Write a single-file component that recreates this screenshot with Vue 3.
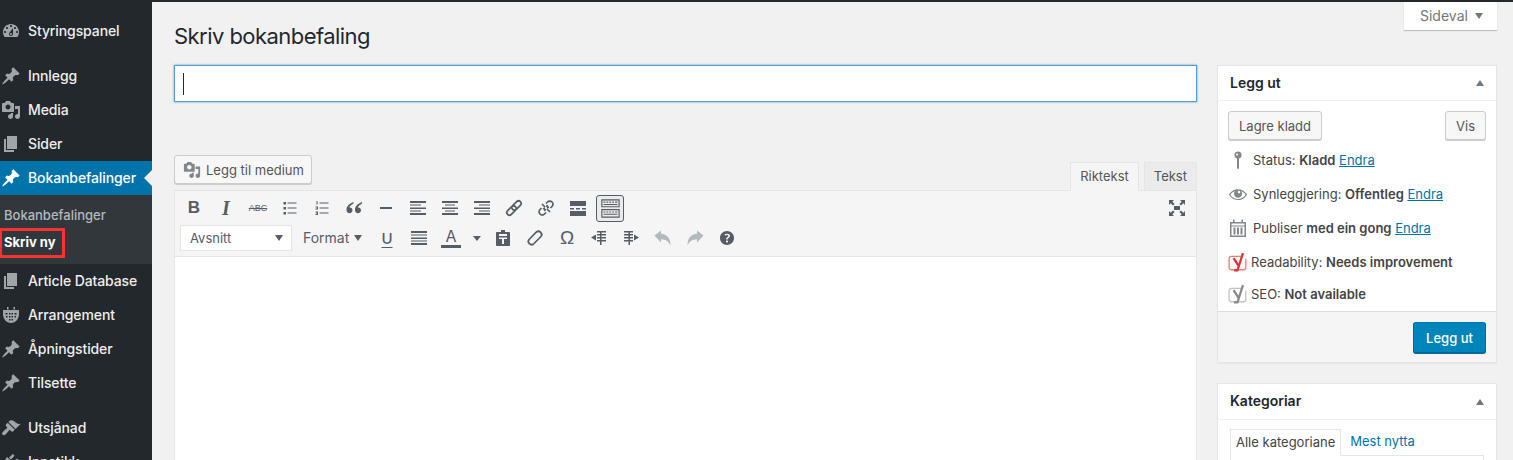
<template>
  <div class="admin">
    <aside class="menu">
      <template v-for="item in menuItems" :key="item.label">
        <div class="menu-item" :class="{ active: item.active, gap: item.gap }">
          <svg class="menu-icon" viewBox="0 0 20 20"><path :d="icons[item.icon]" /></svg>
          <span>{{ item.label }}</span>
          <i v-if="item.active" class="arrow"></i>
        </div>
        <div v-if="item.active" class="submenu">
          <div class="sub-head">Bokanbefalinger</div>
          <div class="sub-new"><span>Skriv ny</span></div>
        </div>
      </template>
    </aside>

    <main class="page">
      <header class="page-head">
        <h1>Skriv bokanbefaling</h1>
        <div class="screen-tab"><span>Sideval</span> <i class="caret"></i></div>
      </header>

      <div class="columns">
        <section class="content">
          <div class="title-input"><i class="cursor"></i></div>

          <div class="editor-top">
            <button class="btn media-btn">
              <svg viewBox="0 0 20 20"><path :d="icons.media" /></svg>
              Legg til medium
            </button>
            <div class="tabs">
              <div class="tab on">Riktekst</div>
              <div class="tab">Tekst</div>
            </div>
          </div>

          <div class="editor">
            <div class="toolbar">
              <div class="tool-row">
                <div
                  v-for="t in rowOne"
                  :key="t.id"
                  class="tool"
                  :class="[t.cls, { pressed: t.pressed }]"
                >
                  <span v-if="t.text">{{ t.text }}</span>
                  <svg v-else viewBox="0 0 20 20"><path :d="t.d" :class="{ line: t.line }" /></svg>
                </div>
                <div class="tool full">
                  <svg viewBox="0 0 20 20"><path :d="icons.fullscreen" /></svg>
                </div>
              </div>
              <div class="tool-row">
                <div class="select">Avsnitt <i class="caret"></i></div>
                <div class="format"><span>Format</span> <i class="caret"></i></div>
                <template v-for="t in rowTwo" :key="t.id">
                  <div class="tool" :class="[t.cls, { off: t.off }]">
                    <span v-if="t.text">{{ t.text }}</span>
                    <svg v-else viewBox="0 0 20 20"><path :d="t.d" :class="{ line: t.line }" /></svg>
                  </div>
                </template>
              </div>
            </div>
            <div class="editor-body"></div>
          </div>
        </section>

        <aside class="side">
          <div class="box">
            <div class="box-head"><span>Legg ut</span> <i class="caret up"></i></div>
            <div class="publish-actions">
              <button class="btn">Lagre kladd</button>
              <button class="btn">Vis</button>
            </div>
            <div class="meta">
              <div v-for="m in metaRows" :key="m.label" class="meta-row">
                <svg class="meta-icon" viewBox="0 0 20 20"><path :d="icons[m.icon]" /></svg>
                <span>{{ m.label }} <b>{{ m.value }}</b> <a href="#">Endra</a></span>
              </div>
              <div class="seo">
                <div v-for="s in seoRows" :key="s.label" class="seo-row" :class="s.cls">
                  <svg class="yoast" viewBox="0 0 18 18">
                    <path d="M16 6v8a2 2 0 0 1-2 2H3a2 2 0 0 1-2-2V6a2 2 0 0 1 2-2h9" class="y-box" />
                    <path d="M5 5.500 9.500 12.500M13.500 1 8.500 16.500H5.500" class="y-mark" />
                  </svg>
                  <span>{{ s.label }} <b>{{ s.value }}</b></span>
                </div>
              </div>
            </div>
            <div class="publish-foot">
              <button class="btn primary">Legg ut</button>
            </div>
          </div>

          <div class="box">
            <div class="box-head tall"><span>Kategoriar</span> <i class="caret up"></i></div>
            <div class="cat-body">
              <div class="cat-tabs">
                <div class="cat-tab on">Alle kategoriane</div>
                <a href="#" class="cat-tab">Mest nytta</a>
              </div>
              <div class="cat-list"></div>
            </div>
          </div>
        </aside>
      </div>
    </main>
  </div>
</template>

<script setup>
const icons = {
  dashboard: 'M3.76 16h12.48c1.1-1.37 1.76-3.11 1.76-5 0-4.42-3.58-8-8-8s-8 3.58-8 8c0 1.89.66 3.63 1.76 5zM10 4c.55 0 1 .45 1 1s-.45 1-1 1-1-.45-1-1 .45-1 1-1zM6 6c.55 0 1 .45 1 1s-.45 1-1 1-1-.45-1-1 .45-1 1-1zm8 0c.55 0 1 .45 1 1s-.45 1-1 1-1-.45-1-1 .45-1 1-1zm-5.37 5.55L12 7v6c0 1.1-.9 2-2 2s-2-.9-2-2c0-.57.24-1.08.63-1.45zM4 10c.55 0 1 .45 1 1s-.45 1-1 1-1-.45-1-1 .45-1 1-1zm12 0c.55 0 1 .45 1 1s-.45 1-1 1-1-.45-1-1 .45-1 1-1zm-5 3c0-.55-.45-1-1-1s-1 .45-1 1 .45 1 1 1 1-.45 1-1z',
  pin: 'M10.44 3.02l1.82-1.82 6.36 6.35-1.83 1.82c-1.05-.68-2.48-.57-3.41.36l-.75.75c-.92.93-1.04 2.35-.35 3.41l-1.83 1.82-2.41-2.41-2.8 2.79c-.42.42-3.38 2.71-3.8 2.29s1.86-3.39 2.28-3.81l2.79-2.79L4.1 9.36l1.83-1.82c1.05.69 2.48.57 3.4-.36l.75-.75c.93-.92 1.05-2.35.36-3.41z',
  media: 'M13 11V4c0-.55-.45-1-1-1h-1.67L9 1H5L3.67 3H2c-.55 0-1 .45-1 1v7c0 .55.45 1 1 1h10c.55 0 1-.45 1-1zM7 4.5c1.38 0 2.5 1.12 2.5 2.5S8.38 9.5 7 9.5 4.5 8.38 4.5 7 5.62 4.5 7 4.5zM14 6h5v10.5c0 1.38-1.12 2.5-2.5 2.5S14 17.88 14 16.5s1.12-2.5 2.5-2.5c.17 0 .34.02.5.05V9h-3V6zm-4 8.05V13h2v3.5c0 1.38-1.12 2.5-2.5 2.5S7 17.88 7 16.5 8.12 14 9.5 14c.17 0 .34.02.5.05z',
  page: 'M6 15V2h10v13H6zm-1 1h8v2H3V5h2v11z',
  events: 'M6 2h1.5v2.5H6zM12.5 2H14v2.5h-1.5zM2 5h16v4c0 5-3.5 9-8 9s-8-4-8-9zM4.5 8v1.5H6.5V8zM8 8v1.5h1.5V8zM10.5 8v1.5H12V8zM13.5 8v1.5h2V8zM5 11v1.5h1.5V11zM8 11v1.5h1.5V11zM10.5 11v1.5H12V11zM13.5 11v1.5H15V11zM8 14v1.5h1.5V14zM10.5 14v1.5H12V14z',
  brush: 'M14.48 11.06L7.41 3.99l1.5-1.5c.5-.56 2.3-.47 3.51.32 1.21.8 1.43 1.28 2.91 2.1 1.18.64 2.45 1.26 4.45.85zm-.71.71L6.7 4.7 4.93 6.47c-.39.39-.39 1.02 0 1.41l1.06 1.06c.39.39.39 1.03 0 1.42-.6.6-1.43 1.11-2.21 1.69-.35.26-.7.53-1.01.84-1.34 1.35-2.5 2.39-1.08 3.81 1.41 1.41 2.45.26 3.8-1.08.3-.3.58-.65.84-1 .57-.78 1.08-1.61 1.69-2.21.39-.39 1.02-.39 1.41 0l1.06 1.06c.39.39 1.02.39 1.41 0z',
  plugin: 'M13.11 4.36L9.87 7.6 8 5.73l3.24-3.24c.35-.34 1.05-.2 1.56.32.52.51.66 1.21.31 1.55zm-8 1.77l.91-1.12 9.01 9.01-1.19.84c-.71.71-2.63 1.16-3.82 1.16H6.14L4.9 17.26c-.59.59-1.54.59-2.12 0-.59-.58-.59-1.53 0-2.12l1.24-1.24v-3.88c0-1.13.4-3.19 1.09-3.89zm7.26 3.97l3.24-3.24c.34-.35 1.04-.21 1.55.31.52.51.66 1.21.31 1.55l-3.24 3.25z',
  location: 'M10 1.5a3.6 3.6 0 0 1 1 7.05V18l-1 1.5L9 18V8.55A3.6 3.6 0 0 1 10 1.5zM9 3.5a1 1 0 1 0 0 2 1 1 0 0 0 0-2z',
  eye: 'M18.3 9.5C15 4.9 8.5 3.8 3.9 7.2c-1.2.9-2.2 2.1-3 3.4.2.4.5.8.8 1.2 3.3 4.6 9.6 5.6 14.2 2.4.9-.7 1.8-1.5 2.5-2.4.3-.4.5-.8.8-1.2-.2-.4-.5-.8-.9-1.1zm-8.2-2.3c.5-.5 1.3-.5 1.8 0s.5 1.3 0 1.8-1.3.5-1.8 0-.5-1.3 0-1.8zm-.1 7.7c-3.1 0-6-1.6-7.7-4.2C3.5 9 5.1 7.8 7 7c-.7.8-1 1.7-1 2.7 0 2.2 1.7 4.1 4 4.1 2.2 0 4.1-1.7 4.1-4 0-1-.4-2-1.1-2.7 1.9.8 3.5 2 4.7 3.7-1.7 2.6-4.6 4.2-7.7 4.2z',
  calendar: 'M5 1.5h1.5V4H13.5V1.5H15V4h3v15H2V4h3zM3.5 5.5v2h13v-2zM3.5 8.5V17.5h13V8.5zM5.5 9.5h2v7h-2zM9 9.5h2v7H9zM12.5 9.5h2v7h-2z',
  fullscreen: 'M2 2h5L5.3 3.7 7.6 6 6 7.6 3.7 5.3 2 7zM18 2v5l-1.7-1.7L14 7.6 12.4 6l2.3-2.3L13 2zM2 18v-5l1.7 1.7L6 12.4 7.6 14l-2.3 2.3L7 18zM18 18h-5l1.7-1.7-2.3-2.3 1.6-1.6 2.3 2.3L18 13zM7 8h6v4H7z'
}

const menuItems = [
  { label: 'Styringspanel', icon: 'dashboard' },
  { label: 'Innlegg', icon: 'pin', gap: true },
  { label: 'Media', icon: 'media' },
  { label: 'Sider', icon: 'page' },
  { label: 'Bokanbefalinger', icon: 'pin', active: true },
  { label: 'Article Database', icon: 'page' },
  { label: 'Arrangement', icon: 'events' },
  { label: 'Åpningstider', icon: 'pin' },
  { label: 'Tilsette', icon: 'pin' },
  { label: 'Utsjånad', icon: 'brush', gap: true },
  { label: 'Innstikk', icon: 'plugin' }
]

const linkPath = 'M7.34 16.34L11.34 12.34A2.6 2.6 0 0 0 7.66 8.66L3.66 12.66A2.6 2.6 0 0 0 7.34 16.34zM12.34 11.34L16.34 7.34A2.6 2.6 0 0 0 12.66 3.66L8.66 7.66A2.6 2.6 0 0 0 12.34 11.34z'

const rowOne = [
  { id: 'bold', text: 'B', cls: 'bold' },
  { id: 'italic', text: 'I', cls: 'italic' },
  { id: 'strike', text: 'ABC', cls: 'strike' },
  { id: 'ul', d: 'M3.5 4h2.500v2.500h-2.500zM3.5 9h2.500v2.500h-2.500zM3.5 14h2.500v2.500h-2.500zM7.5 4.500h9v1h-9zM7.500 9.500h9v1h-9zM7.500 14.500h9v1h-9z' },
  { id: 'ol', d: 'M4.500 3h1v3.500h-1zM3.500 8.500h2.500v3h-2.500v-1h1.500v-1h-1.500zM3.500 13.500h2.500v3.500h-2.500v-1h1.500v-.5h-1v-.7h1v-.3h-1.500zM7.500 4.500h9v1h-9zM7.500 9.500h9v1h-9zM7.500 14.500h9v1h-9z' },
  { id: 'quote', d: 'M9.500 4C5 5.600 2.500 8.500 2.500 11.800c0 2 1.200 3.400 3 3.400 1.700 0 3-1.300 3-2.900 0-1.600-1.100-2.800-2.600-2.800-.2 0-.4 0-.6.100.4-1.400 2-3 4.300-4.100zM18 4c-4.500 1.600-7 4.500-7 7.800 0 2 1.200 3.400 3 3.400 1.700 0 3-1.300 3-2.900 0-1.600-1.100-2.800-2.600-2.800-.2 0-.4 0-.6.100.4-1.400 2-3 4.300-4.100z' },
  { id: 'hr', d: 'M4 9h12v2H4z' },
  { id: 'left', d: 'M2 3h16v2H2zM2 6.500h11v1H2zM2 9.500h16v1.500H2zM2 12.500h11v1H2zM2 15h16v2H2z' },
  { id: 'center', d: 'M2 3h16v2H2zM5 6.500h10v1H5zM2 9.500h16v1.500H2zM5 12.500h10v1H5zM2 15h16v2H2z' },
  { id: 'right', d: 'M2 3h16v2H2zM7 6.500h11v1H7zM2 9.500h16v1.500H2zM7 12.500h11v1H7zM2 15h16v2H2z' },
  { id: 'link', d: linkPath, line: true },
  { id: 'unlink', d: 'M10 5.500L11.500 4A3 3 0 0 1 16 8.500L14.500 10M10 14.500L8.500 16A3 3 0 0 1 4 11.500L5.500 10M6 6l3 3M14 14l-3-3M11.500 7l-1 2M8.500 13l1-2M7 11l2-1M13 9l-2 1', line: true },
  { id: 'more', d: 'M2 3h16v5H2zM2 10h4v1.500H2zM8 10h4v1.500H8zM14 10h4v1.500h-4zM2 13h16v5H2z' },
  { id: 'kbd', pressed: true, d: 'M2 2h16v7H2zM3 3v5h14V3zM4 4h1.500v1H4zM6.500 4h1.500v1H6.500zM9 4h1.500v1H9zM11.500 4h1.500v1h-1.500zM14 4h2v1h-2zM4 6h12v1H4zM2 10.500h16v7.500H2zM3 11.500v5.500h14v-5.500zM4 12.500h1.500v1H4zM6.500 12.500h1.500v1H6.500zM9 12.500h1.500v1H9zM11.500 12.500h1.500v1h-1.500zM14 12.500h2v1h-2zM4 14.500h12v1H4z' }
]

const rowTwo = [
  { id: 'underline', text: 'U', cls: 'under' },
  { id: 'justify', d: 'M2 3h16v2H2zM2 6.500h16v1H2zM2 9.500h16v1.500H2zM2 12.500h16v1H2zM2 15h16v2H2z' },
  { id: 'color', text: 'A', cls: 'color' },
  { id: 'colordrop', cls: 'drop', d: 'M6 8h8l-4 5z' },
  { id: 'paste', d: 'M8 2h4v2h4c.6 0 1 .4 1 1v12c0 .6-.4 1-1 1H4c-.6 0-1-.4-1-1V5c0-.6.4-1 1-1h4zM6 6v2h8V6zM6 9.500v1.500h3v5h2v-5h3V9.500z' },
  { id: 'eraser', line: true, d: 'M8.760 15.760L15.760 8.760A3.200 3.200 0 0 0 11.240 4.240L4.240 11.240A3.200 3.200 0 0 0 8.760 15.760z' },
  { id: 'omega', text: 'Ω', cls: 'omega' },
  { id: 'outdent', d: 'M8 3h9v1.500H8zM8 6h9v1.500H8zM8 9h9v1.500H8zM8 12h9v1.500H8zM11 3h1.500v14H11zM7 6.500v6l-5-3z' },
  { id: 'indent', d: 'M3 3h9v1.500H3zM3 6h9v1.500H3zM3 9h9v1.500H3zM3 12h9v1.500H3zM7.500 3H9v14H7.500zM13 6.500v6l5-3z' },
  { id: 'undo', off: true, d: 'M1.500 7.500L8 2.500v3.300c6 .5 9.500 4 9.500 11.700-2-4.200-4.500-6-9.500-6.200v3.200z' },
  { id: 'redo', off: true, d: 'M18.500 7.500L12 2.500v3.300c-6 .5-9.500 4-9.500 11.700 2-4.200 4.500-6 9.500-6.200v3.200z' },
  { id: 'help', d: 'M17 10c0-3.870-3.140-7-7-7-3.870 0-7 3.130-7 7s3.130 7 7 7c3.860 0 7-3.130 7-7zm-6.300 1.480H9.140v-.43c0-.38.08-.7.24-.98s.46-.57.88-.89c.41-.29.68-.53.81-.71.14-.18.2-.39.2-.62 0-.25-.09-.44-.28-.58-.19-.13-.45-.19-.79-.19-.58 0-1.250.19-2 .57l-.64-1.280c.87-.49 1.800-.74 2.770-.74.81 0 1.450.2 1.920.58.48.39.71.91.71 1.550 0 .43-.09.8-.29 1.110-.19.32-.57.67-1.110 1.060-.38.28-.61.49-.71.63-.1.15-.15.34-.15.57v.35zm-1.470 2.740c-.18-.17-.27-.42-.27-.73 0-.33.08-.58.26-.75s.43-.25.77-.25c.32 0 .57.09.75.26s.27.42.27.74c0 .3-.09.55-.27.72-.18.18-.43.27-.75.27-.33 0-.58-.09-.76-.26z' }
]

const metaRows = [
  { label: 'Status:', value: 'Kladd', icon: 'location' },
  { label: 'Synleggjering:', value: 'Offentleg', icon: 'eye' },
  { label: 'Publiser', value: 'med ein gong', icon: 'calendar' }
]

const seoRows = [
  { label: 'Readability:', value: 'Needs improvement', cls: 'bad' },
  { label: 'SEO:', value: 'Not available', cls: 'none' }
]
</script>

<style>
html, body {
  margin: 0;
  background: #f1f1f1;
  overflow: hidden;
}
</style>

<style scoped>
.admin {
  display: flex;
  width: 1513px;
  height: 460px;
  overflow: hidden;
  border-top: 2px solid #23282d;
  box-sizing: border-box;
  font-family: Inter, Roboto, "Liberation Sans", sans-serif;
  font-size: 13px;
  color: #444;
  background: #f1f1f1;
}

/* left menu */
.menu {
  width: 152px;
  flex: none;
  background: #23282d;
  padding-top: 12px;
  height: 500px;
}
.menu-item {
  position: relative;
  display: flex;
  align-items: center;
  height: 34px;
  color: #eee;
  font-size: 14px;
  font-weight: 500;
  letter-spacing: -0.1px;
}
.menu-item span { margin-bottom: 2px; }
.menu-item.gap { margin-top: 11px; }
.menu-item.active {
  background: #0073aa;
  color: #fff;
}
.menu-icon {
  width: 20px;
  height: 20px;
  margin: 0 7px 0 1px;
  fill: #a0a5aa;
  flex: none;
}
.active .menu-icon { fill: #fff; }
.arrow {
  position: absolute;
  right: 0;
  top: 9px;
  border: 8px solid transparent;
  border-right-color: #f1f1f1;
  border-left-width: 0;
}
.submenu {
  background: #32373c;
  height: 69px;
  padding-top: 11px;
  box-sizing: border-box;
}
.sub-head {
  padding-left: 4px;
  height: 18px;
  line-height: 18px;
  font-size: 13px;
  font-weight: 500;
  color: #b4b9be;
}
.sub-new {
  margin-top: 4px;
  width: 65px;
  height: 30px;
  box-sizing: border-box;
  border: 3px solid #f8322f;
  border-left-width: 2px;
  line-height: 22px;
  padding-left: 2px;
  color: #fff;
  font-size: 13px;
  font-weight: 700;
}

/* main */
.page {
  flex: 1;
  min-width: 0;
  padding: 0 16px 0 22px;
}
.page-head {
  display: flex;
  height: 63px;
  align-items: flex-start;
  justify-content: space-between;
}
h1 {
  margin: 20px 0 0;
  font-size: 22px;
  line-height: 28px;
  font-weight: 400;
  letter-spacing: -0.55px;
  color: #23282d;
}
.screen-tab {
  width: 93px;
  height: 28px;
  box-sizing: border-box;
  padding-left: 16px;
  background: #fff;
  box-shadow: 0 1px 1px rgba(0, 0, 0, 0.2);
  color: #72777c;
  font-size: 14px;
  display: flex;
  align-items: center;
  gap: 7px;
}
.screen-tab span { margin-bottom: 2px; }
.caret {
  display: inline-block;
  border: 4px solid transparent;
  border-top: 6px solid #72777c;
  border-bottom-width: 0;
}
.caret.up {
  border-top-width: 0;
  border-bottom: 6px solid #72777c;
}

.columns {
  display: flex;
  gap: 20px;
}
.content {
  flex: 1;
  min-width: 0;
}
.title-input {
  height: 37px;
  box-sizing: border-box;
  background: #fff;
  border: 1px solid #5b9dd9;
  box-shadow: 0 0 2px rgba(30, 140, 190, 0.8);
  padding: 7px 8px;
}
.cursor {
  display: block;
  width: 1px;
  height: 22px;
  background: #23282d;
}
.editor-top {
  display: flex;
  justify-content: space-between;
  align-items: flex-end;
  margin-top: 53px;
  height: 35px;
}
.btn {
  height: 29px;
  padding: 0 10px;
  border: 1px solid #ccc;
  border-radius: 3px;
  background: #f7f7f7;
  box-shadow: 0 1px 0 #ccc;
  color: #555;
  font: inherit;
  font-size: 13px;
  white-space: nowrap;
}
.media-btn {
  display: flex;
  align-items: center;
  gap: 5px;
  margin-bottom: 6px;
  padding: 0 8px;
  width: 138px;
}
.media-btn svg {
  width: 18px;
  height: 18px;
  flex: none;
  fill: #82878c;
}
.tabs {
  display: flex;
  gap: 5px;
  position: relative;
  top: 1px;
}
.tab {
  height: 29px;
  line-height: 26px;
  box-sizing: border-box;
  padding: 0 9px;
  font-size: 13px;
  color: #555;
  background: #ebebeb;
  border: 1px solid #e5e5e5;
}
.tab.on {
  background: #f5f5f5;
  border-bottom-color: #f5f5f5;
}
.editor {
  border: 1px solid #e5e5e5;
  height: 300px;
  background: #fff;
}
.toolbar {
  height: 66px;
  box-sizing: border-box;
  padding: 2px 3px 0;
  background: #f5f5f5;
  border-bottom: 1px solid #e5e5e5;
}
.tool-row {
  display: flex;
  height: 30px;
  align-items: center;
}
.tool {
  width: 32px;
  height: 28px;
  display: flex;
  align-items: center;
  justify-content: center;
  box-sizing: border-box;
  color: #555d66;
  flex: none;
}
.tool svg {
  width: 20px;
  height: 20px;
  fill: #555d66;
}
.tool .line {
  fill: none;
  stroke: #555d66;
  stroke-width: 1.7;
}
.tool.off svg { fill: #b4b9be; }
.tool.pressed {
  width: 28px;
  margin-left: 2px;
  height: 27px;
  border: 1px solid #555d66;
  border-radius: 3px;
  background: #ebebeb;
}
.tool.pressed svg {
  width: 23px;
  height: 23px;
  flex: none;
}
.tool.full {
  margin-left: auto;
}
.bold span {
  font-size: 17px;
  font-weight: 700;
  font-family: "Liberation Sans", sans-serif;
}
.italic span {
  font-size: 20px;
  font-weight: 700;
  font-style: italic;
  font-family: "Liberation Serif", serif;
}
.strike span {
  font-size: 9px;
  font-weight: 500;
  text-decoration: line-through;
  font-family: "Liberation Sans", sans-serif;
}
.under span {
  font-size: 15px;
  text-decoration: underline;
  text-underline-offset: 3px;
  font-weight: 500;
}
.color span {
  font-size: 16px;
  width: 20px;
  text-align: center;
  line-height: 17px;
  border-bottom: 3px solid #555d66;
}
.omega span { font-size: 19px; font-family: "Liberation Sans", sans-serif; }
.tool.drop {
  width: 20px;
}
.select {
  width: 112px;
  height: 26px;
  box-sizing: border-box;
  margin-left: 2px;
  flex: none;
  background: #fff;
  border: 1px solid #e5e5e5;
  display: flex;
  align-items: center;
  justify-content: space-between;
  padding: 0 8px 0 9px;
  color: #555d66;
  font-size: 13px;
}
.select .caret, .format .caret { border-top-color: #555d66; }
.format {
  width: 79px;
  box-sizing: border-box;
  padding-left: 11px;
  flex: none;
  font-size: 14px;
  color: #555d66;
  display: flex;
  align-items: center;
  gap: 5px;
}
.format span { margin-bottom: 2px; }
.editor-body { height: 234px; background: #fff; }

/* right column */
.side {
  width: 280px;
  flex: none;
}
.box {
  background: #fff;
  border: 1px solid #e5e5e5;
  box-shadow: 0 1px 1px rgba(0, 0, 0, 0.04);
  margin-bottom: 20px;
}
.box-head {
  height: 35px;
  box-sizing: border-box;
  padding: 0 12px;
  display: flex;
  align-items: center;
  justify-content: space-between;
  border-bottom: 1px solid #eee;
  font-size: 14px;
  font-weight: 600;
  color: #23282d;
}
.box-head span { margin-bottom: 2px; }
.box-head.tall { height: 36px; }
.publish-actions {
  display: flex;
  justify-content: space-between;
  padding: 10px 10px 0;
}
.meta { padding: 3px 10px 0; height: 171px; box-sizing: border-box; }
.meta-row {
  display: flex;
  align-items: center;
  height: 34px;
  font-size: 13px;
}
.meta-icon {
  width: 20px;
  height: 20px;
  margin-right: 5px;
  fill: #82878c;
  flex: none;
}
.meta a, .cat-tab { color: #0073aa; }
.meta b { font-weight: 600; }
.seo { margin-top: 1px; }
.seo-row {
  display: flex;
  align-items: center;
  height: 32px;
  gap: 3px;
  font-size: 13px;
}
.yoast { width: 20px; height: 20px; flex: none; }
.y-box { fill: #fff; stroke-width: 1.2; }
.y-mark { fill: none; stroke-width: 2; }
.bad .y-box { stroke: #ee7c7c; }
.bad .y-mark { stroke: #dc3232; }
.none .y-box { stroke: #c4c4c4; }
.none .y-mark { stroke: #888; }
.publish-foot {
  height: 51px;
  box-sizing: border-box;
  padding: 10px;
  background: #f5f5f5;
  border-top: 1px solid #ddd;
  display: flex;
  justify-content: flex-end;
}
.primary {
  height: 31px;
  width: 73px;
  padding: 0;
  background: #0085ba;
  border-color: #0073aa #006799 #006799;
  box-shadow: 0 1px 0 #006799;
  color: #fff;
  font-weight: 500;
}
.cat-body { padding: 9px 12px; }
.cat-tabs { display: flex; height: 27px; }
.cat-tab {
  padding: 0 5px;
  line-height: 24px;
  box-sizing: border-box;
  margin-right: 5px;
  text-decoration: none;
}
.cat-tab.on {
  color: #444;
  border: 1px solid #e5e5e5;
  border-bottom-color: #fff;
  height: 27px;
  margin-right: 4px;
}
.cat-list {
  margin-top: -1px;
  border: 1px solid #e5e5e5;
  height: 100px;
  width: 254px;
  box-sizing: border-box;
}
</style>
